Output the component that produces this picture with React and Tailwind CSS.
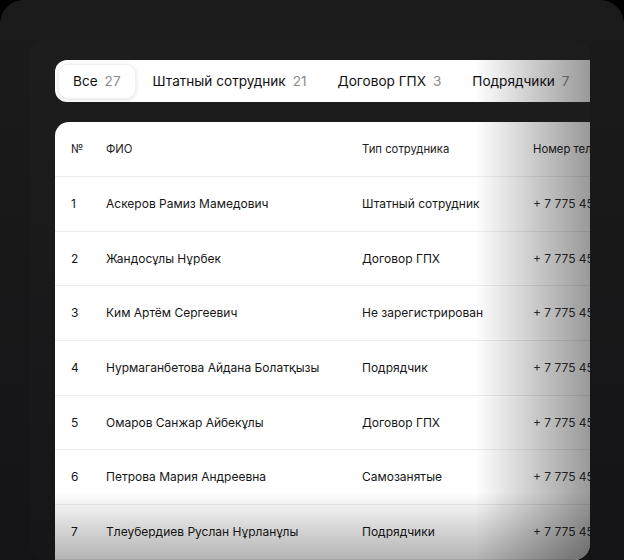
import React from "react";

const tabs = [
  { label: "Все", count: 27, active: true },
  { label: "Штатный сотрудник", count: 21 },
  { label: "Договор ГПХ", count: 3 },
  { label: "Подрядчики", count: 7 },
];

const rows = [
  { n: 1, name: "Аскеров Рамиз Мамедович", type: "Штатный сотрудник" },
  { n: 2, name: "Жандосұлы Нұрбек", type: "Договор ГПХ" },
  { n: 3, name: "Ким Артём Сергеевич", type: "Не зарегистрирован" },
  { n: 4, name: "Нурмаганбетова Айдана Болатқызы", type: "Подрядчик" },
  { n: 5, name: "Омаров Санжар Айбекұлы", type: "Договор ГПХ" },
  { n: 6, name: "Петрова Мария Андреевна", type: "Самозанятые" },
  { n: 7, name: "Тлеубердиев Руслан Нұрланұлы", type: "Подрядчики" },
];

export default function App() {
  return (
    <div
      className="w-[624px] h-[560px] bg-black overflow-hidden"
      style={{ fontFamily: "Inter, 'Noto Sans', sans-serif" }}
    >
      <div className="h-[600px] rounded-[24px] bg-linear-to-b from-[#1b1b1c] to-[#141416] pt-[40px] pl-[30px]">
        <div className="w-[560px] h-[520px] rounded-[16px] overflow-hidden bg-linear-to-b from-[#1d1d1e] to-[#161618] pt-[20px] pl-[25px]">
          {/* tabs */}
          <div className="relative h-[42px] w-[600px] bg-white rounded-l-[12px] flex items-center px-[3px] gap-[3px] text-[13.6px]">
            {tabs.map((t) => (
              <div
                key={t.label}
                className={
                  "h-[35px] px-[14px] flex items-center gap-[7px] rounded-[10px] whitespace-nowrap " +
                  (t.active ? "shadow-[0_1px_4px_rgba(0,0,0,0.12)] border border-[#f0f0f0]" : "")
                }
              >
                <span className="text-[#111]">{t.label}</span>
                <span className="text-[#8c8c8c]">{t.count}</span>
              </div>
            ))}
            <div className="absolute top-0 bottom-0 left-[420px] w-[115px] bg-linear-to-r from-transparent to-black/40 pointer-events-none" />
          </div>

          {/* table */}
          <div className="relative mt-[20px] w-[600px] h-[460px] bg-white rounded-tl-[14px] text-[12px] text-[#161616]">
            <div className="grid grid-cols-[35px_256px_171px_200px] items-center h-[55px] pl-[16px] border-b border-[#ececec] text-[11.3px] text-[#222]">
              <div>№</div>
              <div>ФИО</div>
              <div>Тип сотрудника</div>
              <div className="whitespace-nowrap">Номер телефона</div>
            </div>
            {rows.map((r) => (
              <div
                key={r.n}
                className="grid grid-cols-[35px_256px_171px_200px] items-center h-[54.7px] pl-[16px] border-b border-[#ececec]"
              >
                <div>{r.n}</div>
                <div className="whitespace-nowrap">{r.name}</div>
                <div className="whitespace-nowrap">{r.type}</div>
                <div className="whitespace-nowrap text-[#333]">+ 7 775 458 12 34</div>
              </div>
            ))}
            <div className="absolute top-0 bottom-0 left-[420px] w-[115px] bg-linear-to-r from-transparent to-black/40 pointer-events-none" />
            <div className="absolute left-0 right-0 top-[370px] h-[90px] bg-linear-to-b from-transparent to-black/40 pointer-events-none" />
          </div>
        </div>
      </div>
    </div>
  );
}
